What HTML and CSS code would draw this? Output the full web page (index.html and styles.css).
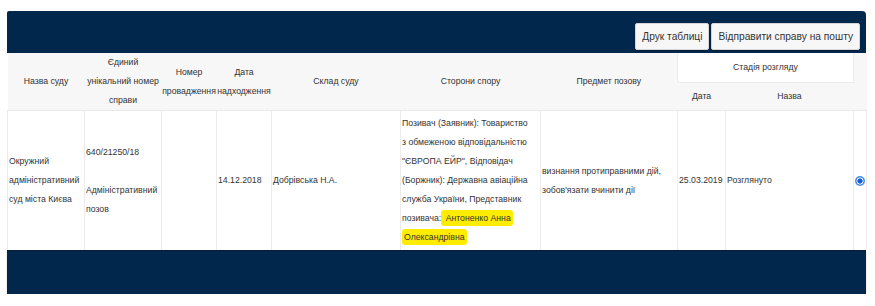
FILE: index.html
```html
<!DOCTYPE html>
<html lang="uk">
<head>
<meta charset="utf-8">
<link rel="stylesheet" href="styles.css">
</head>
<body>
<div class="panel">
  <div class="toolbar">
    <button class="btn">Друк таблиці</button>
    <button class="btn">Відправити справу на пошту</button>
  </div>
  <table class="cases">
    <colgroup>
      <col class="w77"><col class="w77"><col class="w55"><col class="w55"><col class="w129">
      <col class="w140"><col class="w137"><col class="w48"><col class="w128"><col class="w13">
    </colgroup>
    <thead>
      <tr class="h1">
        <th rowspan="2">Назва суду</th>
        <th rowspan="2">Єдиний унікальний номер справи</th>
        <th rowspan="2">Номер провадження</th>
        <th rowspan="2">Дата надходження</th>
        <th rowspan="2">Склад суду</th>
        <th rowspan="2">Сторони спору</th>
        <th rowspan="2">Предмет позову</th>
        <th colspan="2" class="stage">Стадія розгляду</th>
        <th rowspan="2"></th>
      </tr>
      <tr class="h2">
        <th>Дата</th>
        <th>Назва</th>
      </tr>
    </thead>
    <tbody>
      <tr>
        <td>Окружний адміністративний суд міста Києва</td>
        <td>640/21250/18<br><br>Адміністративний позов</td>
        <td></td>
        <td>14.12.2018</td>
        <td>Добрівська Н.А.</td>
        <td class="parties">Позивач (Заявник): Товариство з обмеженою відповідальністю "ЄВРОПА ЕЙР", Відповідач (Боржник): Державна авіаційна служба України, Представник позивача:<mark class="hl"> Антоненко Анна Олександрівна</mark></td>
        <td>визнання протиправними дій, зобов'язати вчинити дії</td>
        <td>25.03.2019</td>
        <td>Розглянуто</td>
        <td class="radio-cell"><span class="radio"></span></td>
      </tr>
    </tbody>
  </table>
  <div class="footer-band"></div>
</div>
</body>
</html>
```
FILE: styles.css
```css
html, body {
  margin: 0;
  padding: 0;
  background: #ffffff;
}
body {
  font-family: "Liberation Sans", Arial, sans-serif;
  color: #333333;
}
.panel {
  width: 859px;
  margin: 11px 0 0 7px;
}
.toolbar {
  background: #02274c;
  height: 42px;
  box-sizing: border-box;
  padding: 12px 6px 3px 0;
  display: flex;
  justify-content: flex-end;
  gap: 2px;
  border-radius: 2px 4px 0 0;
}
.btn {
  height: 27px;
  font-family: "Liberation Sans", Arial, sans-serif;
  font-size: 10.2px;
  color: #333333;
  background: #f7f7f7;
  border: 1px solid #d5d5d5;
  border-radius: 2px;
  padding: 0 6px;
  box-shadow: 0 1px 1px rgba(0,0,0,0.25);
}
.cases {
  width: 859px;
  table-layout: fixed;
  border-collapse: collapse;
  font-size: 8.7px;
}
.w77 { width: 77px; }
.w55 { width: 55px; }
.w129 { width: 129px; }
.w140 { width: 140px; }
.w137 { width: 137px; }
.w48 { width: 48px; }
.w128 { width: 128px; }
.w13 { width: 13px; }
thead {
  background: #f7f7f7;
}
th {
  font-weight: normal;
  line-height: 19px;
  padding: 0;
  text-align: center;
  vertical-align: middle;
  border-bottom: 1px solid #e8e8e8;
}
.h1 { height: 29px; }
.h2 { height: 28px; }
.stage {
  background: #ffffff;
  border: 1px solid #ececec;
  border-top: none;
  height: 28px;
}
td {
  line-height: 19px;
  padding: 3px 6px 3px 1px;
  vertical-align: middle;
  border-left: 1px solid #ececec;
  border-right: 1px solid #ececec;
}
td.parties {
  padding-right: 10px;
}
tbody tr { height: 138px; }
.hl {
  background: #ffec00;
  color: #333333;
  padding: 3px 2px;
  border-radius: 3px;
  -webkit-box-decoration-break: clone;
  box-decoration-break: clone;
}
.radio-cell {
  padding: 0;
  text-align: center;
}
.radio {
  display: inline-block;
  width: 10px;
  height: 10px;
  border-radius: 50%;
  box-sizing: border-box;
  background: radial-gradient(circle, #1a5fd8 0 2.4px, #ffffff 2.8px 3.3px, #4c8fe8 3.7px);
  vertical-align: middle;
}
.footer-band {
  background: #02274c;
  height: 43px;
  border-top: 1px solid #0a1a3a;
  box-shadow: 0 2px 1px rgba(0,0,0,0.35);
}
```
